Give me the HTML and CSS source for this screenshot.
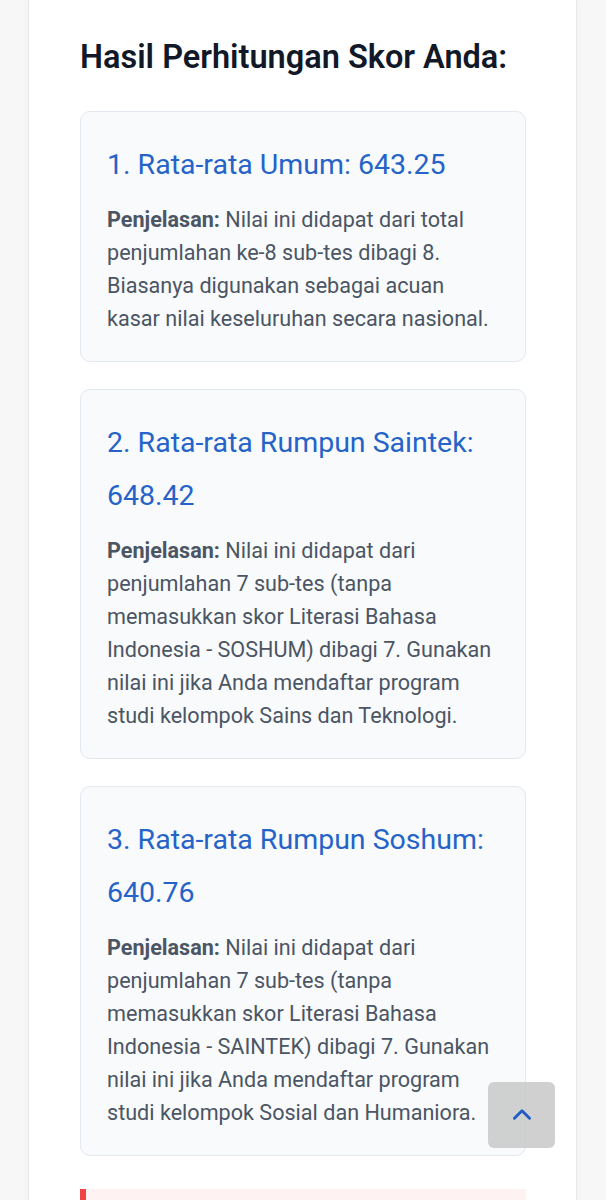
FILE: index.html
```html
<!DOCTYPE html>
<html lang="id">
<head>
<meta charset="utf-8">
<title>Hasil Perhitungan Skor</title>
<link rel="stylesheet" href="styles.css">
</head>
<body>
<div class="page">
  <main class="container">
    <h2 class="heading">Hasil Perhitungan Skor Anda:</h2>
    <section class="result">
      <h3 class="result-title">1. Rata-rata Umum: 643.25</h3>
      <p class="result-text"><strong>Penjelasan:</strong> Nilai ini didapat dari total penjumlahan ke-8 sub-tes dibagi 8. Biasanya digunakan sebagai acuan kasar nilai keseluruhan secara nasional.</p>
    </section>
    <section class="result">
      <h3 class="result-title">2. Rata-rata Rumpun Saintek: 648.42</h3>
      <p class="result-text"><strong>Penjelasan:</strong> Nilai ini didapat dari penjumlahan 7 sub-tes (tanpa memasukkan skor Literasi Bahasa Indonesia - SOSHUM) dibagi 7. Gunakan nilai ini jika Anda mendaftar program studi kelompok Sains dan Teknologi.</p>
    </section>
    <section class="result">
      <h3 class="result-title">3. Rata-rata Rumpun Soshum: 640.76</h3>
      <p class="result-text"><strong>Penjelasan:</strong> Nilai ini didapat dari penjumlahan 7 sub-tes (tanpa memasukkan skor Literasi Bahasa Indonesia - SAINTEK) dibagi 7. Gunakan nilai ini jika Anda mendaftar program studi kelompok Sosial dan Humaniora.</p>
    </section>
    <div class="notice">
      <p class="notice-text">&nbsp;</p>
    </div>
  </main>
</div>
<button class="to-top" aria-label="Kembali ke atas">
  <svg width="26" height="26" viewBox="0 0 24 24" fill="none" stroke="#1f5cc4" stroke-width="2.6" stroke-linecap="round" stroke-linejoin="round"><path d="M5 15l7-7 7 7"/></svg>
</button>
</body>
</html>
```
FILE: styles.css
```css
html, body {
  margin: 0;
  padding: 0;
}
body {
  background: #f7f7f7;
  font-family: Roboto, "Noto Sans", "Liberation Sans", sans-serif;
  color: #4b5563;
}
.page {
  padding-left: 28px;
  width: 549px;
}
.container {
  background: #ffffff;
  border-left: 1px solid #e8e8e8;
  border-right: 1px solid #e8e8e8;
  padding: 37px 50px 40px 51px;
  box-shadow: 0 0 6px rgba(0,0,0,0.03);
}
.heading {
  margin: 0 0 34px 0;
  font-size: 32.5px;
  line-height: 40px;
  font-weight: 600;
  color: #111827;
}
.result {
  background: #f8fafc;
  border: 1px solid #e2e8f0;
  border-radius: 10px;
  padding: 26px 26px 26px 26px;
  margin-bottom: 27px;
}
.result-title {
  margin: 0 0 12px 0;
  font-size: 28.5px;
  line-height: 53px;
  font-weight: 400;
  color: #2563c9;
}
.result-text {
  margin: 0;
  font-size: 21.6px;
  line-height: 33px;
}
.result-text strong {
  font-weight: 700;
  color: #4b5563;
}
.notice {
  margin-top: 33px;
  background: #fef2f2;
  border-left: 6px solid #ef4444;
  padding: 20px;
}
.notice-text {
  margin: 0;
  font-size: 20px;
  line-height: 33px;
}
.to-top {
  position: fixed;
  right: 51px;
  bottom: 52px;
  width: 67px;
  height: 66px;
  border: none;
  border-radius: 6px;
  background: rgba(200, 200, 200, 0.85);
  display: flex;
  align-items: center;
  justify-content: center;
  padding: 0;
}
```
